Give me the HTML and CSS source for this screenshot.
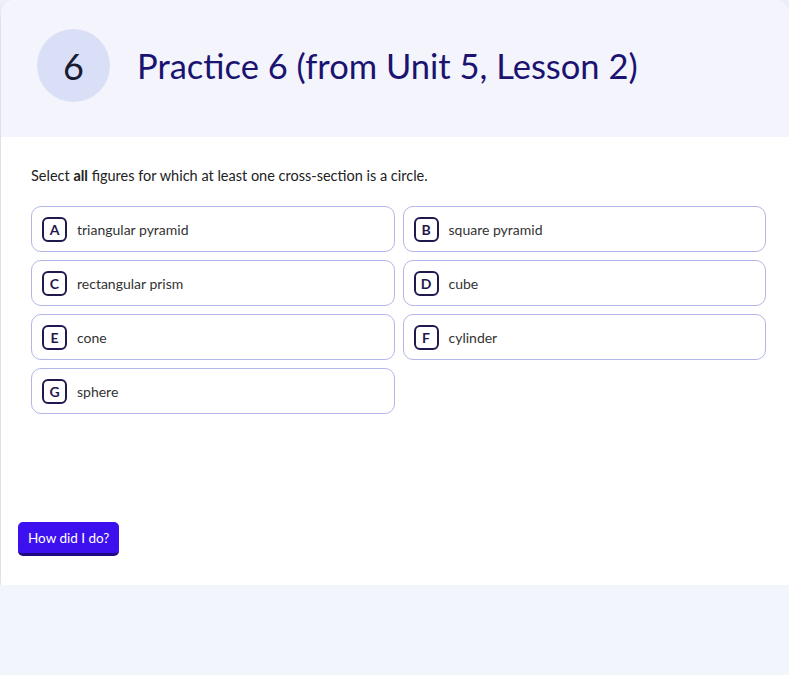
FILE: index.html
```html
<!DOCTYPE html>
<html lang="en">

<head>
  <meta charset="UTF-8">
  <meta name="viewport" content="width=device-width, initial-scale=1.0">
  <title>Practice 6</title>
  <link rel="stylesheet" href="styles.css">
</head>

<body>
  <div class="card">
    <div class="card-header">
      <div class="number">6</div>
      <h1>Practice 6 (from Unit 5, Lesson 2)</h1>
    </div>

    <div class="card-body">
      <p class="prompt">Select <b>all</b> figures for which at least one cross-section is a circle.</p>

      <div class="options">
        <label class="option"><span class="letter">A</span>triangular pyramid</label>
        <label class="option"><span class="letter">B</span>square pyramid</label>
        <label class="option"><span class="letter">C</span>rectangular prism</label>
        <label class="option"><span class="letter">D</span>cube</label>
        <label class="option"><span class="letter">E</span>cone</label>
        <label class="option"><span class="letter">F</span>cylinder</label>
        <label class="option"><span class="letter">G</span>sphere</label>
      </div>

      <button class="check">How did I do?</button>
    </div>
  </div>
</body>

</html>
```

FILE: styles.css
```css
body {
  margin: 0;
  background-color: #f3f5fd;
  font-family: Lato, "Noto Sans", sans-serif;
  color: #222;
}

.card {
  margin-left: 1px;
  background-color: #fff;
  border-radius: 14px 14px 0 0;
  box-shadow: 0 6px 18px rgba(40, 40, 90, 0.22);
}

.card-header {
  display: flex;
  align-items: center;
  gap: 27px;
  height: 137px;
  padding-left: 36px;
  box-sizing: border-box;
  background-color: #f4f4fd;
  border-radius: 14px 14px 0 0;
}

.number {
  width: 73px;
  height: 73px;
  border-radius: 50%;
  background-color: #d8dff7;
  display: flex;
  justify-content: center;
  align-items: center;
  font-size: 36px;
  color: #1a1a33;
  margin-top: -6px;
}

h1 {
  margin: -6px 0 0;
  font-size: 34.5px;
  font-weight: 400;
  color: #1a1470;
}

.card-body {
  padding: 29px 23px 29px 30px;
}

.prompt {
  margin: 0 0 20px;
  font-size: 14.5px;
  line-height: 20px;
}

.prompt b {
  font-weight: 700;
}

.options {
  display: grid;
  grid-template-columns: 1fr 1fr;
  gap: 8px;
}

.option {
  display: flex;
  align-items: center;
  gap: 10px;
  height: 46px;
  padding-left: 10px;
  box-sizing: border-box;
  border: 1px solid #b4b6e8;
  border-radius: 10px;
  font-size: 14px;
  color: #333;
}

.letter {
  width: 25px;
  height: 25px;
  box-sizing: border-box;
  border: 2px solid #1f1a4d;
  border-radius: 6px;
  display: flex;
  justify-content: center;
  align-items: center;
  font-size: 14px;
  font-weight: 700;
  color: #1f1a4d;
}

.check {
  margin: 108px 0 0 -13px;
  padding: 0 10px;
  height: 34px;
  background-color: #3d10f0;
  color: #fff;
  border: none;
  border-bottom: 3px solid #22087f;
  border-radius: 5px;
  font-family: Lato, sans-serif;
  font-size: 13.5px;
  font-weight: 400;
  cursor: pointer;
}
```
